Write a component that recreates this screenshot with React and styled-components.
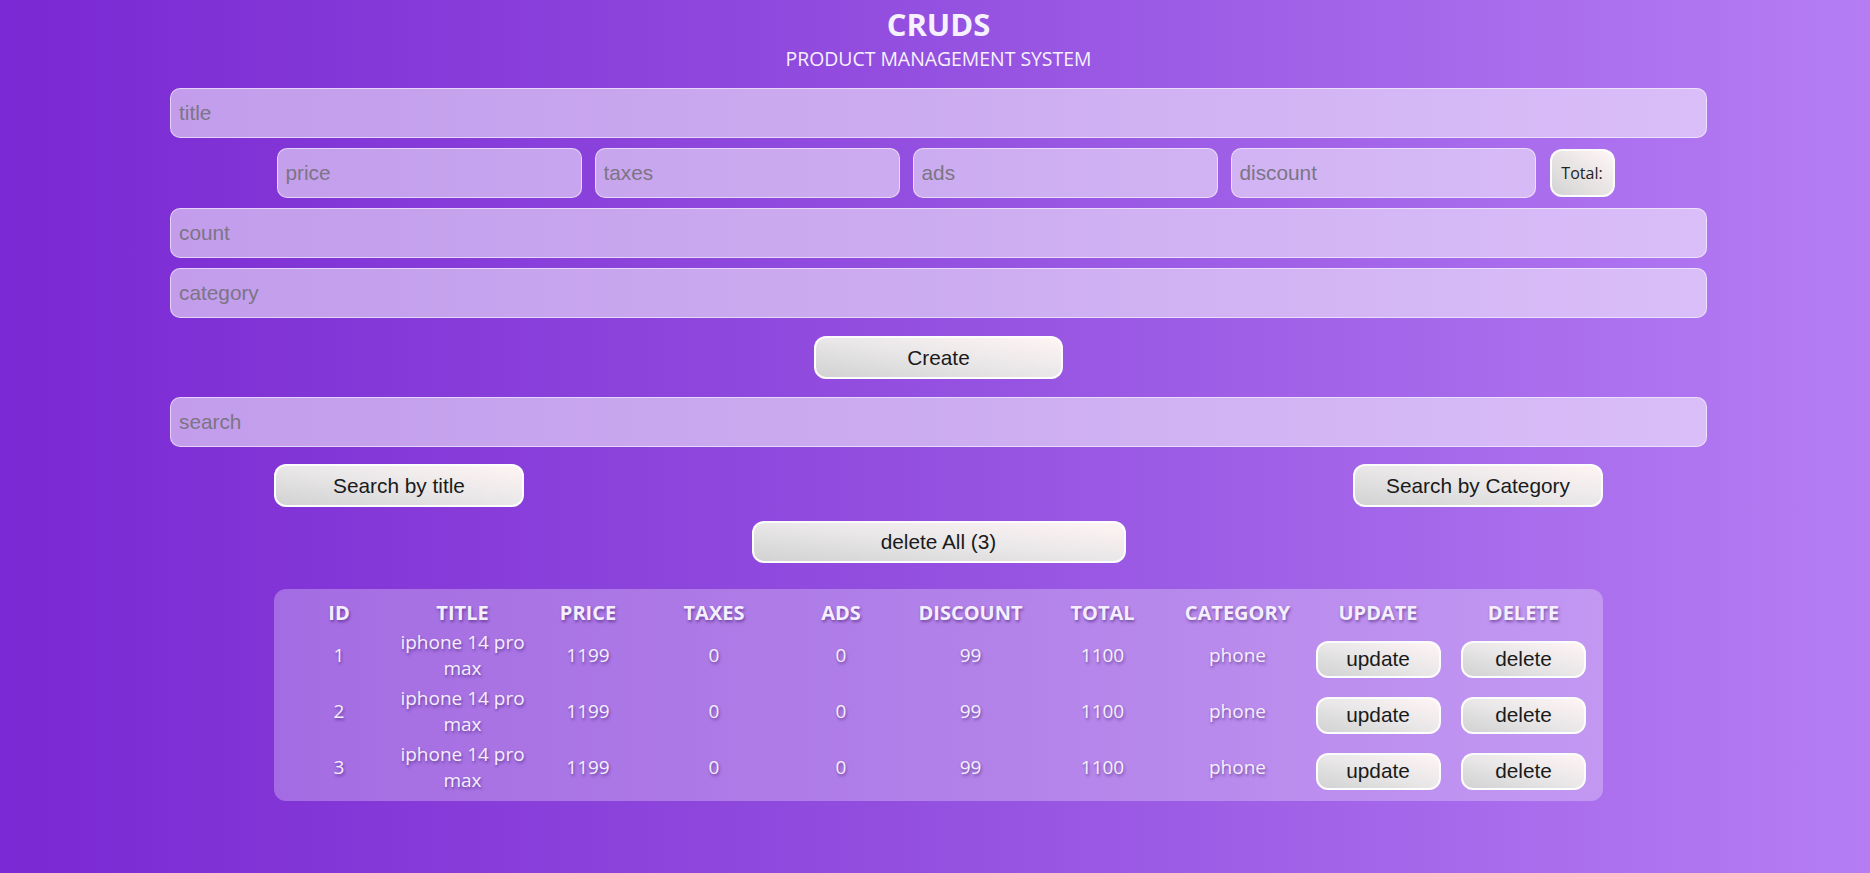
import React from "react";
import styled, { createGlobalStyle } from "styled-components";

const GlobalStyle = createGlobalStyle`
  html, body {
    margin: 0;
    padding: 0;
  }
  body {
    min-height: 100vh;
    background: linear-gradient(to right, #7a28d3 0%, #9450e0 50%, #b57df4 100%);
    font-family: "Open Sans", "Noto Sans", sans-serif;
  }
  * { box-sizing: border-box; }
`;

const Page = styled.div`
  min-height: 873px;
  padding: 4px 0 40px 7px;
`;

const Head = styled.header`
  text-align: center;
  color: #f6f1ff;
`;

const Brand = styled.h1`
  margin: 0;
  font-size: 31px;
  line-height: 40px;
  font-weight: 700;
`;

const Subtitle = styled.p`
  margin: 2px 0 0;
  font-size: 19.4px;
  line-height: 26px;
  font-weight: 400;
  text-transform: uppercase;
`;

const Main = styled.main`
  width: 1537px;
  margin: 16px auto 0;
  display: flex;
  flex-direction: column;
`;

const Inputs = styled.div`
  display: flex;
  flex-direction: column;
  gap: 10px;
`;

const Field = styled.input`
  display: block;
  width: ${(p) => (p.$w ? `${p.$w}px` : "100%")};
  height: 50px;
  padding: 0 8px;
  border: 1px solid rgba(255, 255, 255, 0.55);
  border-radius: 10px;
  background: rgba(255, 255, 255, 0.53);
  font-family: "Liberation Sans", Arial, sans-serif;
  font-size: 20.8px;
  color: #333;
  outline: none;
  &::placeholder {
    color: #7b7585;
  }
`;

const PriceRow = styled.div`
  display: flex;
  justify-content: center;
  align-items: center;
  gap: 13px;
  height: 50px;
  padding-left: 14px;
`;

const TotalBadge = styled.small`
  display: flex;
  align-items: center;
  justify-content: center;
  width: 65px;
  height: 48px;
  margin-left: 1px;
  border: 2px solid rgba(255, 255, 255, 0.85);
  border-radius: 12px;
  background: linear-gradient(to top right, #d3d3d3, #fff6f6);
  color: #222;
  font-family: "Open Sans", sans-serif;
  font-size: 16px;
`;

const Button = styled.button`
  display: block;
  width: ${(p) => p.$w}px;
  height: ${(p) => p.$h || 43}px;
  padding: 0;
  border: 2px solid rgba(255, 255, 255, 0.9);
  border-radius: 12px;
  background: linear-gradient(to top right, #d2d2d2 0%, #e9e7e8 50%, #fff4f4 100%);
  color: #1a1a1a;
  font-family: "Liberation Sans", Arial, sans-serif;
  font-size: 20.8px;
  text-shadow: none;
  cursor: pointer;
`;

const CreateWrap = styled.div`
  display: flex;
  justify-content: center;
  margin: 18px 0 18px;
`;

const Inner = styled.section`
  width: 1329px;
  margin: 0 auto;
`;

const SearchButtons = styled.div`
  display: flex;
  justify-content: space-between;
  margin-top: 17px;
`;

const DeleteAllWrap = styled.div`
  display: flex;
  justify-content: center;
  margin: 14px 0 26px;
`;

const Table = styled.div`
  padding: 10px 6px 6px 0;
  border-radius: 12px;
  background: rgba(255, 255, 255, 0.28);
  color: #f4efff;
  text-shadow: 1px 2px 3px rgba(40, 0, 80, 0.45);
`;

const Row = styled.div`
  display: grid;
  grid-template-columns: 126px 125px 126px 126px 128px 131px 133px 137px 144px 147px;
  align-items: center;
  height: ${(p) => (p.$head ? 28 : 56)}px;
  font-size: ${(p) => (p.$head ? 20 : 19)}px;
  font-weight: ${(p) => (p.$head ? 700 : 400)};
  line-height: 26px;
  text-transform: ${(p) => (p.$head ? "uppercase" : "none")};
`;

const Cell = styled.div`
  display: flex;
  justify-content: center;
  text-align: center;
  padding-left: ${(p) => (p.$first ? 4 : 0)}px;
`;

const TitleText = styled.span`
  display: block;
  max-width: 136px;
  flex-shrink: 0;
`;

const ActionCell = styled(Cell)`
  padding-top: 8px;
`;

const columns = ["id", "title", "price", "taxes", "ads", "discount", "total", "category", "update", "delete"];

const products = [1, 2, 3].map((id) => ({
  id,
  title: "iphone 14 pro max",
  price: 1199,
  taxes: 0,
  ads: 0,
  discount: 99,
  total: 1100,
  category: "phone",
}));

export default function App() {
  return (
    <Page>
      <GlobalStyle />
      <Head>
        <Brand>CRUDS</Brand>
        <Subtitle>Product Management System</Subtitle>
      </Head>
      <Main>
        <Inputs>
          <Field placeholder="title" />
          <PriceRow>
            <Field $w={305} placeholder="price" />
            <Field $w={305} placeholder="taxes" />
            <Field $w={305} placeholder="ads" />
            <Field $w={305} placeholder="discount" />
            <TotalBadge>Total:</TotalBadge>
          </PriceRow>
          <Field placeholder="count" />
          <Field placeholder="category" />
        </Inputs>
        <CreateWrap>
          <Button $w={249}>Create</Button>
        </CreateWrap>
        <Field placeholder="search" />
        <Inner>
          <SearchButtons>
            <Button $w={250}>Search by title</Button>
            <Button $w={250}>Search by Category</Button>
          </SearchButtons>
          <DeleteAllWrap>
            <Button $w={374} $h={42}>delete All (3)</Button>
          </DeleteAllWrap>
          <Table>
            <Row $head>
              {columns.map((c, i) => (
                <Cell key={c} $first={i === 0}>{c}</Cell>
              ))}
            </Row>
            {products.map((p) => (
              <Row key={p.id}>
                <Cell $first>{p.id}</Cell>
                <Cell>
                  <TitleText>{p.title}</TitleText>
                </Cell>
                <Cell>{p.price}</Cell>
                <Cell>{p.taxes}</Cell>
                <Cell>{p.ads}</Cell>
                <Cell>{p.discount}</Cell>
                <Cell>{p.total}</Cell>
                <Cell>{p.category}</Cell>
                <ActionCell>
                  <Button $w={125} $h={37}>update</Button>
                </ActionCell>
                <ActionCell>
                  <Button $w={125} $h={37}>delete</Button>
                </ActionCell>
              </Row>
            ))}
          </Table>
        </Inner>
      </Main>
    </Page>
  );
}
